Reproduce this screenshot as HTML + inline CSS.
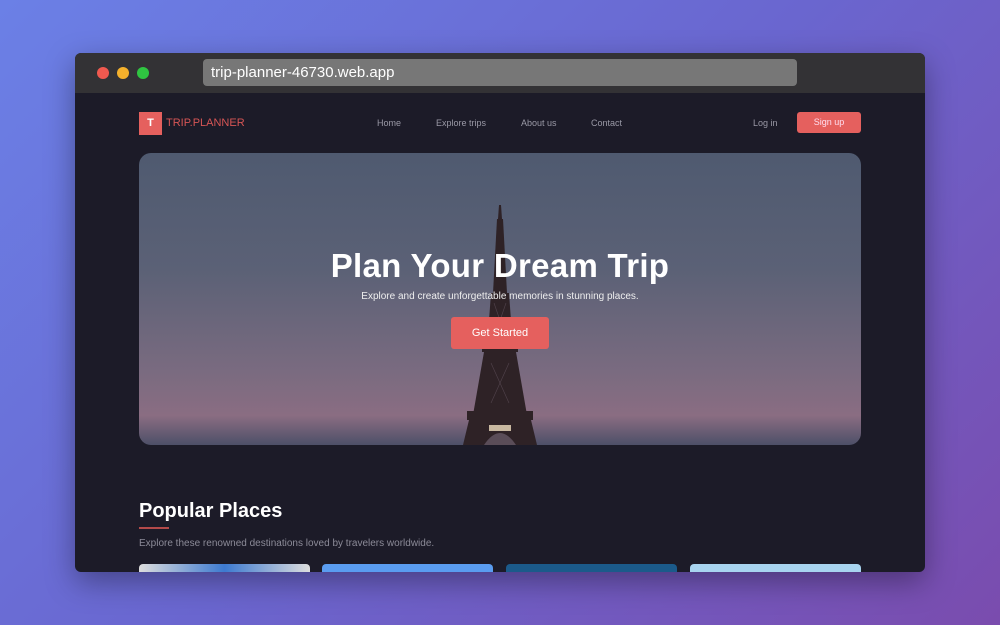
<!DOCTYPE html>
<html><head><meta charset="utf-8"><style>
*{margin:0;padding:0;box-sizing:border-box}
body{width:1000px;height:625px;overflow:hidden;background:linear-gradient(135deg,#6b80e6 0%,#6a66cf 50%,#7a4cae 100%);font-family:"Liberation Sans",sans-serif;position:relative}
.win{position:absolute;left:75px;top:53px;width:850px;height:519px;border-radius:6px;overflow:hidden;background:#1c1b28;box-shadow:0 10px 30px rgba(0,0,0,.35)}
.bar{height:40px;background:#333235;position:relative}
.dot{position:absolute;top:14px;width:12px;height:12px;border-radius:50%}
.url{position:absolute;left:128px;top:6px;width:594px;height:27px;background:#777;border-radius:4px;color:#fff;font-size:15px;line-height:27px;padding-left:8px}
.nav{position:absolute;top:59px;font-size:9px;color:#9a99a6}
.hero{position:absolute;left:64px;top:100px;width:722px;height:292px;border-radius:12px;overflow:hidden;background:linear-gradient(180deg,#4f5a70 0%,#5b6176 40%,#7a6b80 75%,#8a6d82 90%,#4d5068 100%)}
</style></head><body>
<div class="win">
<div class="bar">
<div class="dot" style="left:22px;background:#f0594f"></div>
<div class="dot" style="left:42px;background:#f5b12c"></div>
<div class="dot" style="left:62px;background:#2fc541"></div>
<div class="url">trip-planner-46730.web.app</div>
</div>
<div style="position:absolute;left:64px;top:59px;width:23px;height:23px;background:#e5605e;color:#fff;font-size:11px;font-weight:bold;text-align:center;line-height:23px">T</div>
<div style="position:absolute;left:91px;top:64px;font-size:11px;color:#d65555">TRIP.PLANNER</div>
<div class="nav" style="left:302px;top:65px">Home</div>
<div class="nav" style="left:361px;top:65px">Explore trips</div>
<div class="nav" style="left:446px;top:65px">About us</div>
<div class="nav" style="left:516px;top:65px">Contact</div>
<div class="nav" style="left:678px;top:65px">Log in</div>
<div style="position:absolute;left:722px;top:59px;width:64px;height:21px;background:#e5605e;border-radius:3px;color:#fde;font-size:9px;text-align:center;line-height:21px">Sign up</div>
<div class="hero">
<svg width="722" height="292" style="position:absolute;left:0;top:0">
<g fill="#2e2226">
<polygon points="360,52 362,52 363,66 359,66"/>
<polygon points="358,66 364,66 368,140 354,140"/>
<polygon points="352,140 370,140 374,195 348,195"/>
<rect x="343" y="192" width="36" height="7"/>
<polygon points="345,199 377,199 388,262 334,262"/>
<rect x="328" y="258" width="66" height="9"/>
<polygon points="330,267 392,267 398,292 324,292"/>
</g>
<g stroke="#6a5a66" stroke-width="0.6" opacity=".6">
<line x1="352" y1="210" x2="370" y2="250"/><line x1="370" y1="210" x2="352" y2="250"/>
<line x1="355" y1="150" x2="367" y2="185"/><line x1="367" y1="150" x2="355" y2="185"/>
</g>
<path d="M345 292 Q361 268 377 292Z" fill="#5a4d58"/>
<rect x="350" y="272" width="22" height="6" fill="#c8b8a0"/>
</svg>
<div style="position:absolute;width:100%;top:94px;text-align:center;color:#fff;font-size:33px;font-weight:bold;letter-spacing:.3px">Plan Your Dream Trip</div>
<div style="position:absolute;width:100%;top:138px;text-align:center;color:#eee;font-size:10px">Explore and create unforgettable memories in stunning places.</div>
<div style="position:absolute;left:312px;top:164px;width:98px;height:32px;background:#e5605e;border-radius:3px;color:#fff;font-size:11px;text-align:center;line-height:32px">Get Started</div>
</div>
<div style="position:absolute;left:64px;top:447px;color:#fff;font-size:20px;font-weight:bold">Popular Places</div>
<div style="position:absolute;left:64px;top:474px;width:30px;height:2px;background:#b34a4a"></div>
<div style="position:absolute;left:64px;top:485px;color:#8c8b98;font-size:10px">Explore these renowned destinations loved by travelers worldwide.</div>
<div style="position:absolute;left:64px;top:511px;width:171px;height:10px;border-radius:4px 4px 0 0;background:linear-gradient(90deg,#ddd,#3d7ad0,#ddd)"></div>
<div style="position:absolute;left:247px;top:511px;width:171px;height:10px;border-radius:4px 4px 0 0;background:#5a9cf0"></div>
<div style="position:absolute;left:431px;top:511px;width:171px;height:10px;border-radius:4px 4px 0 0;background:#1b5a8a"></div>
<div style="position:absolute;left:615px;top:511px;width:171px;height:10px;border-radius:4px 4px 0 0;background:#a8d4f0"></div>
</div>
</body></html>
